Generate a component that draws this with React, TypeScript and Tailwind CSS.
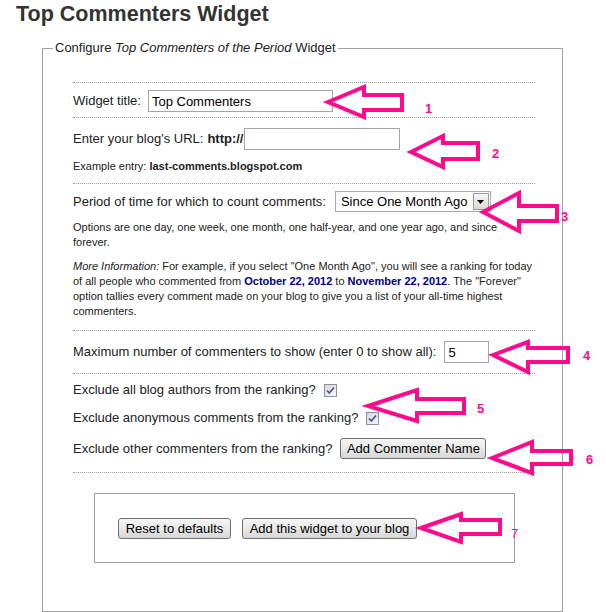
import React from "react";

const PINK = "#ff0a8c";

type Arrow = [number, number, number, number, number, number, number, number];
// tipX, tipY, headX, headTop, headBottom, shaftTop, shaftBottom, rightX
const arrows: Arrow[] = [
  [328, 102, 364, 87, 117, 95, 110, 402],
  [411, 152, 443, 136, 167, 143, 159, 478],
  [483, 212, 519, 193, 231, 206, 221, 557],
  [493, 355, 528, 342, 372, 348, 362, 568],
  [368, 406, 417, 390, 421, 399, 413, 464],
  [492, 458, 532, 442, 473, 451, 464, 571],
  [421, 528, 461, 514, 542, 520, 534, 500],
];

const labels: { t: string; x: number; y: number; bold: boolean }[] = [
  { t: "1", x: 425, y: 113, bold: true },
  { t: "2", x: 492, y: 158, bold: true },
  { t: "3", x: 561, y: 221, bold: true },
  { t: "4", x: 583, y: 360, bold: true },
  { t: "5", x: 477, y: 413, bold: true },
  { t: "6", x: 586, y: 464, bold: true },
  { t: "7", x: 511, y: 538, bold: false },
];

function Checkbox() {
  return (
    <span className="ml-[8px] inline-flex h-[13px] w-[13px] items-center justify-center border border-[#8e8f9f] bg-gradient-to-br from-[#d8d8dc] to-[#f7f7f9]">
      <svg width="11" height="11" viewBox="0 0 11 11">
        <path d="M2 5.5 L4.3 8 L9 2.5" fill="none" stroke="#4a5a92" strokeWidth="1.8" />
      </svg>
    </span>
  );
}

function Btn({ children, className }: { children: React.ReactNode; className: string }) {
  return (
    <button
      type="button"
      className={
        "h-[21px] rounded-[3px] border border-[#707070] bg-gradient-to-b from-[#f4f4f4] via-[#e8e8e8] to-[#d6d6d6] text-center text-[13px] leading-[19px] text-black " +
        className
      }
    >
      {children}
    </button>
  );
}

export default function App() {
  return (
    <div className="relative h-[612px] w-[606px] overflow-hidden bg-white font-['Liberation_Sans',Arial,sans-serif] text-[#222]">
      <h1 className="h-[28px] pl-4 text-[21.5px] leading-[28px] font-bold text-[#333]">
        Top Commenters Widget
      </h1>

      <fieldset className="mt-3 ml-[42px] w-[521px] border border-[#a0a0a0] pl-[10px] pb-[48px]">
        <legend className="px-[2px] text-[13px] leading-4">
          Configure <i>Top Commenters of the Period</i> Widget
        </legend>

        <div className="ml-[20px] w-[462px] text-[13px]">
          {/* Section 1 */}
          <div className="mt-[26px] border-t border-dotted border-[#9a9a9a] pt-[7px] pb-[5px]">
            <div className="flex h-[22px] items-center">
              <span>Widget title:</span>
              <input
                readOnly
                value="Top Commenters"
                className="ml-[7px] h-[22px] w-[185px] border border-[#a5a5a5] px-[3px] text-[13px] text-black outline-none"
              />
            </div>
          </div>

          {/* Section 2 */}
          <div className="border-t border-dotted border-[#9a9a9a] pt-[10px] pb-[9px]">
            <div className="flex h-[22px] items-center">
              <span>Enter your blog's URL:</span>
              <b className="ml-[4px]">http://</b>
              <input
                readOnly
                value=""
                className="ml-[1px] h-[22px] w-[156px] border border-[#a5a5a5] px-[3px] text-[13px] outline-none"
              />
            </div>
            <p className="mt-[9px] text-[11px] leading-[15px]">
              Example entry: <b>last-comments.blogspot.com</b>
            </p>
          </div>

          {/* Section 3 */}
          <div className="border-t border-dotted border-[#9a9a9a] pt-[7px] pb-[11px]">
            <div className="flex h-[21px] items-center">
              <span>Period of time for which to count comments:</span>
              <div className="ml-[9px] flex h-[21px] w-[156px] items-center justify-between border border-[#a5acb5] bg-white">
                <span className="pl-[5px] text-[13px] text-black">Since One Month Ago</span>
                <span className="mr-[1px] flex h-[17px] w-[16px] items-center justify-center border border-[#9a9a9a] bg-gradient-to-b from-[#f6f6f6] to-[#d8d8d8]">
                  <svg width="7" height="4" viewBox="0 0 7 4">
                    <path d="M0 0 H7 L3.5 4 Z" fill="#000" />
                  </svg>
                </span>
              </div>
            </div>
            <p className="mt-[8px] whitespace-nowrap text-[11px] leading-[15px]">
              Options are one day, one week, one month, one half-year, and one year ago, and since
              <br />
              forever.
            </p>
            <p className="mt-[9px] whitespace-nowrap text-[11px] leading-[15px]">
              <i>More Information:</i> For example, if you select "One Month Ago", you will see a ranking for today
              <br />
              of all people who commented from <b className="text-[#000080]">October 22, 2012</b> to{" "}
              <b className="text-[#000080]">November 22, 2012</b>. The "Forever"
              <br />
              option tallies every comment made on your blog to give you a list of your all-time highest
              <br />
              commenters.
            </p>
          </div>

          {/* Section 4 */}
          <div className="border-t border-dotted border-[#9a9a9a] pt-[10px] pb-[10px]">
            <div className="flex h-[22px] items-center">
              <span>Maximum number of commenters to show (enter 0 to show all):</span>
              <input
                readOnly
                value="5"
                className="ml-[8px] h-[22px] w-[45px] border border-[#a5a5a5] px-[3px] text-[13px] text-black outline-none"
              />
            </div>
          </div>

          {/* Section 5 */}
          <div className="border-y border-dotted border-[#9a9a9a] pt-[8px] pb-[13px]">
            <div className="flex h-[16px] items-center">
              <span>Exclude all blog authors from the ranking?</span>
              <Checkbox />
            </div>
            <div className="mt-[12px] flex h-[16px] items-center">
              <span>Exclude anonymous comments from the ranking?</span>
              <Checkbox />
            </div>
            <div className="mt-[12px] flex h-[21px] items-center">
              <span>Exclude other commenters from the ranking?</span>
              <Btn className="ml-[8px] w-[146px]">Add Commenter Name</Btn>
            </div>
          </div>

          {/* Buttons box */}
          <div className="mt-[20px] ml-[21px] flex w-[421px] border border-[#a0a0a0] pt-[24px] pb-[23px] pl-[23px]">
            <Btn className="w-[113px]">Reset to defaults</Btn>
            <Btn className="ml-[11px] w-[175px]">Add this widget to your blog</Btn>
          </div>
        </div>
      </fieldset>

      <svg
        className="pointer-events-none absolute left-0 top-0 z-10"
        width="606"
        height="612"
        viewBox="0 0 606 612"
      >
        {arrows.map(([tx, ty, hx, ht, hb, st, sb, rx], i) => (
          <polygon
            key={i}
            points={`${tx},${ty} ${hx},${ht} ${hx},${st} ${rx},${st} ${rx},${sb} ${hx},${sb} ${hx},${hb}`}
            fill="none"
            stroke={PINK}
            strokeWidth={4}
            strokeLinejoin="miter"
          />
        ))}
        {labels.map((l) => (
          <text
            key={l.t}
            x={l.x}
            y={l.y}
            fill={PINK}
            fontSize={13}
            fontWeight={l.bold ? 700 : 400}
            fontFamily="'Liberation Sans', Arial, sans-serif"
          >
            {l.t}
          </text>
        ))}
      </svg>
    </div>
  );
}
